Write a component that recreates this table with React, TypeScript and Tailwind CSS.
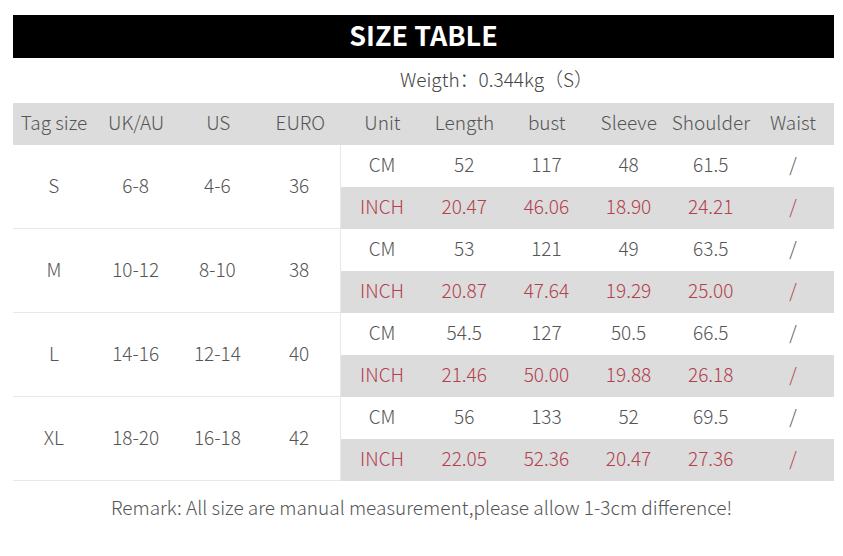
const font = { fontFamily: '"Noto Sans CJK SC", "Noto Sans", sans-serif' };

const headers = ['Tag size', 'UK/AU', 'US', 'EURO', 'Unit', 'Length', 'bust', 'Sleeve', 'Shoulder', 'Waist'];

const sizes = [
  { tag: 'S', uk: '6-8', us: '4-6', eu: '36', cm: ['52', '117', '48', '61.5'], inch: ['20.47', '46.06', '18.90', '24.21'] },
  { tag: 'M', uk: '10-12', us: '8-10', eu: '38', cm: ['53', '121', '49', '63.5'], inch: ['20.87', '47.64', '19.29', '25.00'] },
  { tag: 'L', uk: '14-16', us: '12-14', eu: '40', cm: ['54.5', '127', '50.5', '66.5'], inch: ['21.46', '50.00', '19.88', '26.18'] },
  { tag: 'XL', uk: '18-20', us: '16-18', eu: '42', cm: ['56', '133', '52', '69.5'], inch: ['22.05', '52.36', '20.47', '27.36'] },
];

function SizeGroup({ s }: { s: (typeof sizes)[number] }) {
  return (
    <div className="flex">
      <div className="grid w-[328px] grid-cols-4 items-center border-b border-r border-[#e8e8e8] pb-[3px] text-[#555]">
        <span className="text-center">{s.tag}</span>
        <span className="text-center">{s.uk}</span>
        <span className="text-center">{s.us}</span>
        <span className="text-center">{s.eu}</span>
      </div>
      <div className="flex w-[493px] flex-col">
        <div className="grid h-[42px] grid-cols-6 items-center pb-[3px] text-[#555]">
          <span className="text-center">CM</span>
          {s.cm.map((v, i) => (
            <span key={i} className="text-center">{v}</span>
          ))}
          <span className="text-center">/</span>
        </div>
        <div className="grid h-[42px] grid-cols-6 items-center bg-[#dcdcdc] pb-[3px] text-[#b3404e]">
          <span className="text-center">INCH</span>
          {s.inch.map((v, i) => (
            <span key={i} className="text-center">{v}</span>
          ))}
          <span className="text-center">/</span>
        </div>
      </div>
    </div>
  );
}

export default function App() {
  return (
    <div className="h-[556px] w-[843px] bg-white pt-[15px] text-[19px] font-light" style={font}>
      <div className="mx-[13px] flex h-[43px] w-[821px] items-center justify-center bg-black pb-[2px]">
        <span className="text-[27px] font-bold text-white">SIZE TABLE</span>
      </div>
      <div className="flex h-[45px] items-center justify-center pb-[2px] pl-[150px] text-[#444]">
        Weigth：0.344kg（S）
      </div>
      <div className="mx-[13px] w-[821px]">
        <div className="grid h-[42px] grid-cols-10 items-center bg-[#dcdcdc] pb-[3px] text-[#555]">
          {headers.map((h) => (
            <span key={h} className="whitespace-nowrap text-center">{h}</span>
          ))}
        </div>
        {sizes.map((s) => (
          <SizeGroup key={s.tag} s={s} />
        ))}
      </div>
      <div className="flex h-[56px] items-center justify-center pb-[3px] text-[#555]">
        Remark: All size are manual measurement,please allow 1-3cm difference!
      </div>
    </div>
  );
}
